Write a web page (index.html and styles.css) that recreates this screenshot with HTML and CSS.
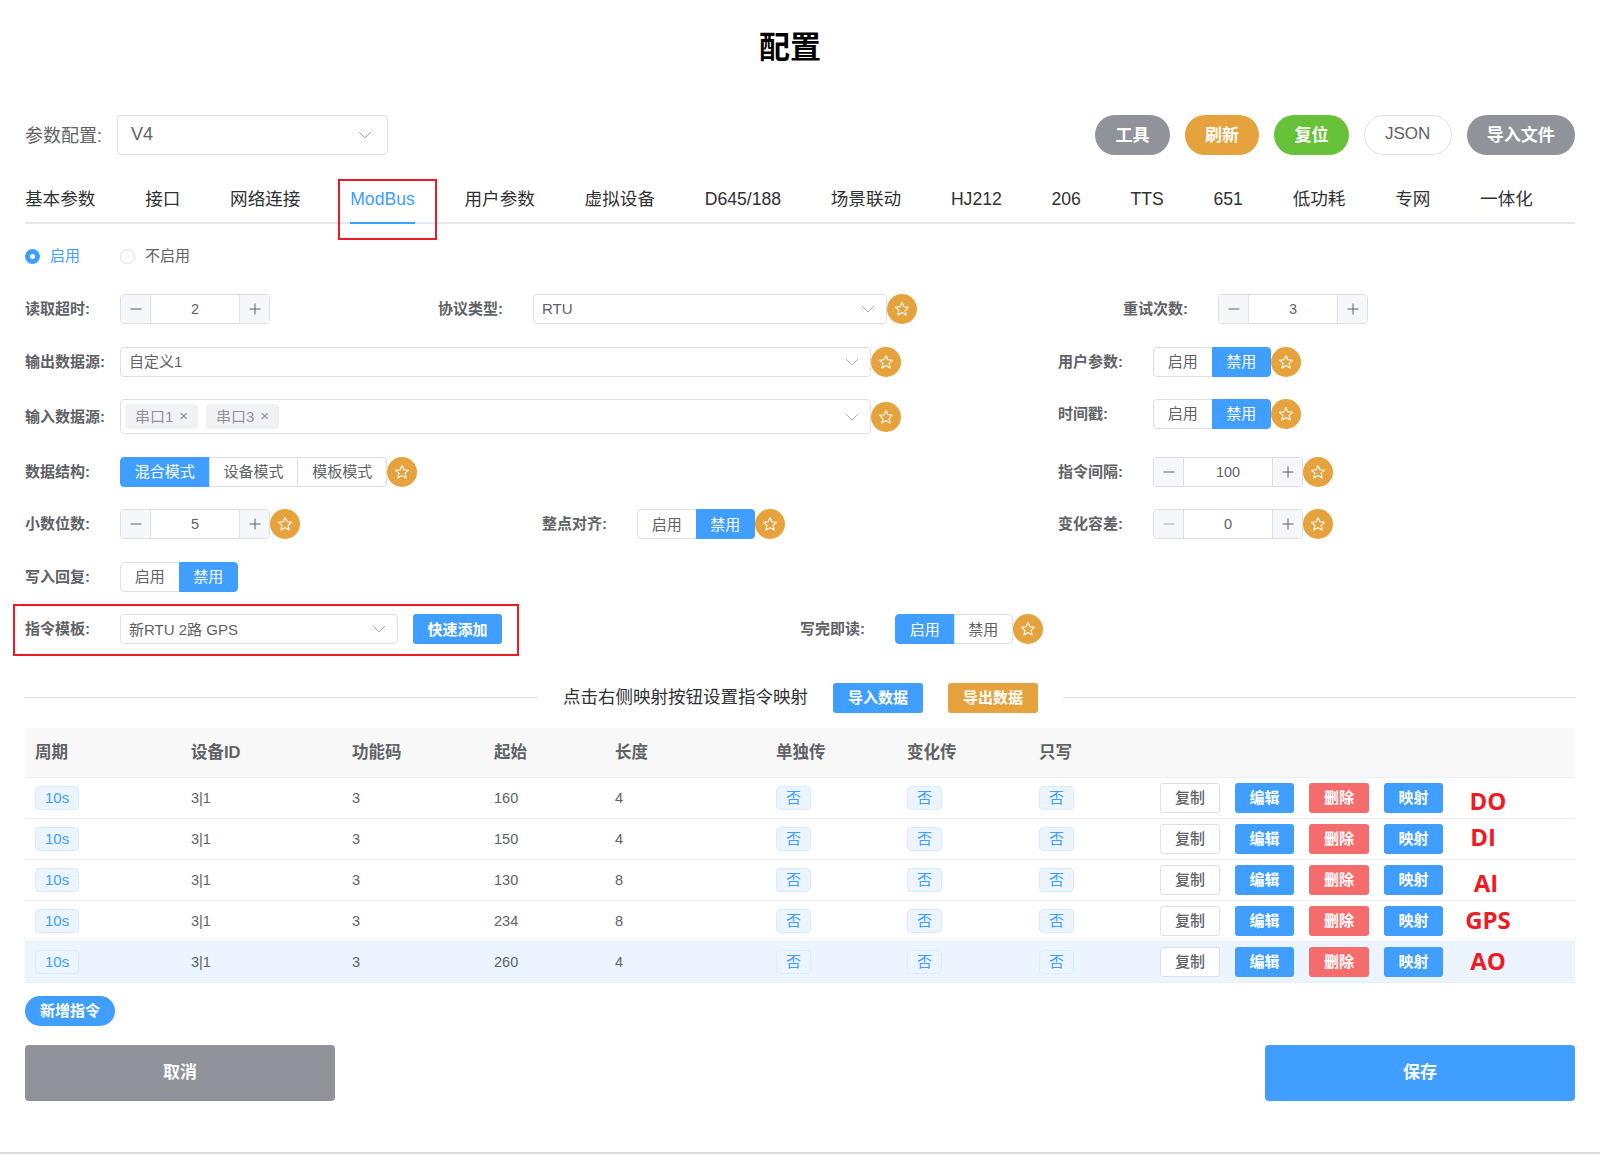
FILE: index.html
```html
<!DOCTYPE html>
<html lang="zh">
<head>
<meta charset="utf-8">
<title>配置</title>
<link rel="stylesheet" href="styles.css">
</head>
<body>
<svg class="sprites" width="0" height="0">
  <symbol id="star" viewBox="0 0 16 16"><path d="M8 1.6l1.9 4.2 4.6.5-3.4 3.1 1 4.5L8 11.6l-4.1 2.3 1-4.5L1.5 6.300l4.600-.5z" fill="none" stroke="currentColor" stroke-width="1.1" stroke-linejoin="round"/></symbol>
  <symbol id="chev" viewBox="0 0 14 8"><path d="M1 1l6 6 6-6" fill="none" stroke="currentColor" stroke-width="1"/></symbol>
  <symbol id="minus" viewBox="0 0 14 14"><path d="M1.500 7h11" fill="none" stroke="currentColor" stroke-width="1"/></symbol>
  <symbol id="plus" viewBox="0 0 14 14"><path d="M1.500 7h11M7 1.500v11" fill="none" stroke="currentColor" stroke-width="1"/></symbol>
</svg>
<div class="page">
  <h1 class="title">配置</h1>

  <div class="toolbar">
    <div class="config-pick">
      <span class="config-label">参数配置:</span>
      <div class="select select-config"><span>V4</span><svg class="chev"><use href="#chev"/></svg></div>
    </div>
    <div class="toolbar-btns">
      <button class="pill pill-gray">工具</button>
      <button class="pill pill-orange">刷新</button>
      <button class="pill pill-green">复位</button>
      <button class="pill pill-plain">JSON</button>
      <button class="pill pill-gray">导入文件</button>
    </div>
  </div>

  <nav class="tabs">
    <span class="tab">基本参数</span>
    <span class="tab">接口</span>
    <span class="tab">网络连接</span>
    <span class="tab tab-active">ModBus<i class="tab-mark"></i></span>
    <span class="tab">用户参数</span>
    <span class="tab">虚拟设备</span>
    <span class="tab">D645/188</span>
    <span class="tab">场景联动</span>
    <span class="tab">HJ212</span>
    <span class="tab">206</span>
    <span class="tab">TTS</span>
    <span class="tab">651</span>
    <span class="tab">低功耗</span>
    <span class="tab">专网</span>
    <span class="tab">一体化</span>
  </nav>

  <div class="radios">
    <label class="radio radio-on"><i class="dot"></i><span>启用</span></label>
    <label class="radio"><i class="dot"></i><span>不启用</span></label>
  </div>

  <form class="form">
    <div class="row">
      <div class="field f-a"><span class="lbl">读取超时:</span>
        <div class="num"><b class="num-btn"><svg><use href="#minus"/></svg></b><span class="num-val">2</span><b class="num-btn"><svg><use href="#plus"/></svg></b></div>
      </div>
      <div class="field f-b"><span class="lbl">协议类型:</span>
        <div class="select select-proto"><span>RTU</span><svg class="chev"><use href="#chev"/></svg></div>
        <i class="star"><svg><use href="#star"/></svg></i>
      </div>
      <div class="field"><span class="lbl">重试次数:</span>
        <div class="num"><b class="num-btn"><svg><use href="#minus"/></svg></b><span class="num-val">3</span><b class="num-btn"><svg><use href="#plus"/></svg></b></div>
      </div>
    </div>

    <div class="row">
      <div class="field f-wide"><span class="lbl">输出数据源:</span>
        <div class="select select-wide"><span>自定义1</span><svg class="chev"><use href="#chev"/></svg></div>
        <i class="star"><svg><use href="#star"/></svg></i>
      </div>
      <div class="field"><span class="lbl">用户参数:</span>
        <div class="seg"><span>启用</span><span class="seg-on">禁用</span></div>
        <i class="star"><svg><use href="#star"/></svg></i>
      </div>
    </div>

    <div class="row row-tall">
      <div class="field f-wide"><span class="lbl">输入数据源:</span>
        <div class="select select-wide select-tall">
          <div class="chips"><span class="chip">串口1<em>×</em></span><span class="chip">串口3<em>×</em></span></div>
          <svg class="chev"><use href="#chev"/></svg>
        </div>
        <i class="star"><svg><use href="#star"/></svg></i>
      </div>
      <div class="field field-up"><span class="lbl">时间戳:</span>
        <div class="seg"><span>启用</span><span class="seg-on">禁用</span></div>
        <i class="star"><svg><use href="#star"/></svg></i>
      </div>
    </div>

    <div class="row">
      <div class="field f-wide"><span class="lbl">数据结构:</span>
        <div class="seg seg-3"><span class="seg-on">混合模式</span><span>设备模式</span><span>模板模式</span></div>
        <i class="star"><svg><use href="#star"/></svg></i>
      </div>
      <div class="field"><span class="lbl">指令间隔:</span>
        <div class="num"><b class="num-btn"><svg><use href="#minus"/></svg></b><span class="num-val">100</span><b class="num-btn"><svg><use href="#plus"/></svg></b></div>
        <i class="star"><svg><use href="#star"/></svg></i>
      </div>
    </div>

    <div class="row">
      <div class="field f-c"><span class="lbl">小数位数:</span>
        <div class="num"><b class="num-btn"><svg><use href="#minus"/></svg></b><span class="num-val">5</span><b class="num-btn"><svg><use href="#plus"/></svg></b></div>
        <i class="star"><svg><use href="#star"/></svg></i>
      </div>
      <div class="field f-d"><span class="lbl">整点对齐:</span>
        <div class="seg"><span>启用</span><span class="seg-on">禁用</span></div>
        <i class="star"><svg><use href="#star"/></svg></i>
      </div>
      <div class="field"><span class="lbl">变化容差:</span>
        <div class="num"><b class="num-btn num-dim"><svg><use href="#minus"/></svg></b><span class="num-val">0</span><b class="num-btn"><svg><use href="#plus"/></svg></b></div>
        <i class="star"><svg><use href="#star"/></svg></i>
      </div>
    </div>

    <div class="row">
      <div class="field"><span class="lbl">写入回复:</span>
        <div class="seg"><span>启用</span><span class="seg-on">禁用</span></div>
      </div>
    </div>

    <div class="row">
      <div class="field f-tpl"><span class="lbl">指令模板:</span>
        <div class="select select-tpl"><span>新RTU 2路 GPS</span><svg class="chev"><use href="#chev"/></svg></div>
        <button type="button" class="btn btn-blue btn-quick">快速添加</button>
      </div>
      <div class="field"><span class="lbl">写完即读:</span>
        <div class="seg"><span class="seg-on">启用</span><span>禁用</span></div>
        <i class="star"><svg><use href="#star"/></svg></i>
      </div>
    </div>
    <i class="redbox redbox-tpl"></i>
  </form>

  <div class="divider">
    <i class="rule rule-l"></i>
    <span class="divider-text">点击右侧映射按钮设置指令映射</span>
    <button class="btn btn-blue btn-io">导入数据</button>
    <button class="btn btn-orange btn-io">导出数据</button>
    <i class="rule rule-r"></i>
  </div>

  <table class="grid">
    <colgroup>
      <col class="c1"><col class="c2"><col class="c3"><col class="c4"><col class="c5"><col class="c6"><col class="c7"><col class="c8"><col>
    </colgroup>
    <thead>
      <tr><th>周期</th><th>设备ID</th><th>功能码</th><th>起始</th><th>长度</th><th>单独传</th><th>变化传</th><th>只写</th><th></th></tr>
    </thead>
    <tbody>
      <tr>
        <td><span class="tag">10s</span></td><td>3|1</td><td>3</td><td>160</td><td>4</td>
        <td><span class="tag">否</span></td><td><span class="tag">否</span></td><td><span class="tag">否</span></td>
        <td class="acts"><button class="btn btn-plain">复制</button><button class="btn btn-blue">编辑</button><button class="btn btn-red">删除</button><button class="btn btn-blue">映射</button><span class="note note-do">DO</span></td>
      </tr>
      <tr>
        <td><span class="tag">10s</span></td><td>3|1</td><td>3</td><td>150</td><td>4</td>
        <td><span class="tag">否</span></td><td><span class="tag">否</span></td><td><span class="tag">否</span></td>
        <td class="acts"><button class="btn btn-plain">复制</button><button class="btn btn-blue">编辑</button><button class="btn btn-red">删除</button><button class="btn btn-blue">映射</button><span class="note note-di">DI</span></td>
      </tr>
      <tr>
        <td><span class="tag">10s</span></td><td>3|1</td><td>3</td><td>130</td><td>8</td>
        <td><span class="tag">否</span></td><td><span class="tag">否</span></td><td><span class="tag">否</span></td>
        <td class="acts"><button class="btn btn-plain">复制</button><button class="btn btn-blue">编辑</button><button class="btn btn-red">删除</button><button class="btn btn-blue">映射</button><span class="note note-ai">AI</span></td>
      </tr>
      <tr>
        <td><span class="tag">10s</span></td><td>3|1</td><td>3</td><td>234</td><td>8</td>
        <td><span class="tag">否</span></td><td><span class="tag">否</span></td><td><span class="tag">否</span></td>
        <td class="acts"><button class="btn btn-plain">复制</button><button class="btn btn-blue">编辑</button><button class="btn btn-red">删除</button><button class="btn btn-blue">映射</button><span class="note note-gps">GPS</span></td>
      </tr>
      <tr class="row-hover">
        <td><span class="tag">10s</span></td><td>3|1</td><td>3</td><td>260</td><td>4</td>
        <td><span class="tag">否</span></td><td><span class="tag">否</span></td><td><span class="tag">否</span></td>
        <td class="acts"><button class="btn btn-plain">复制</button><button class="btn btn-blue">编辑</button><button class="btn btn-red">删除</button><button class="btn btn-blue">映射</button><span class="note note-ao">AO</span></td>
      </tr>
    </tbody>
  </table>

  <button class="add">新增指令</button>

  <div class="footer">
    <button class="foot foot-gray">取消</button>
    <button class="foot foot-blue">保存</button>
  </div>
</div>
</body>
</html>
```
FILE: styles.css
```css
* { box-sizing: border-box; }
html, body { margin: 0; padding: 0; background: #fff; }
body {
  font-family: "Liberation Sans", "Noto Sans CJK SC", sans-serif;
  color: #606266;
  font-size: 15px;
}
.sprites { position: absolute; }
button { font-family: inherit; cursor: pointer; }

.page {
  position: relative;
  height: 1154px;
  padding: 0 25px;
  border-bottom: 2px solid #dcdcdc;
}
.title {
  margin: 0;
  height: 115px;
  padding: 26px 20px 0 0;
  line-height: 44px;
  text-align: center;
  font-size: 31px;
  font-weight: 700;
  color: #000;
}

.toolbar { display: flex; justify-content: space-between; height: 40px; }
.config-pick { display: flex; align-items: center; }
.config-label { width: 92px; padding-bottom: 2px; font-size: 18px; color: #606266; white-space: nowrap; }
.select {
  display: flex;
  align-items: center;
  justify-content: space-between;
  height: 30px;
  padding: 0 11px 0 8px;
  border: 1px solid #dcdfe6;
  border-radius: 4px;
  background: #fff;
  font-size: 15px;
  color: #606266;
}
.select > span { padding-bottom: 2px; }
.select-config { width: 271px; height: 40px; font-size: 18px; padding: 0 15px 0 13px; }
.select-proto { width: 354px; }
.select-wide { width: 751px; }
.select-tall { height: 35px; padding-left: 4px; }
.select-tpl { width: 278px; }
.chev { width: 14px; height: 8px; color: #a8abb2; flex: none; }

.toolbar-btns { display: flex; gap: 15px; }
.pill {
  height: 40px;
  padding: 0 20.250px 3px;
  border: 0;
  border-radius: 20px;
  font-size: 17px;
  font-weight: 700;
  color: #fff;
}
.pill-gray { background: #909399; }
.pill-orange { background: #e6a23c; }
.pill-green { background: #67c23a; }
.pill-plain { background: #fff; border: 1px solid #dcdfe6; color: #606266; font-weight: 400; }

.tabs {
  display: flex;
  justify-content: space-between;
  height: 50px;
  margin-top: 19px;
  padding-right: 42px;
  border-bottom: 2px solid #e4e7ed;
}
.tab {
  position: relative;
  height: 50px;
  line-height: 50px;
  font-size: 17.6px;
  color: #303133;
}
.tab-active { color: #409eff; }
.tab-active::after {
  content: "";
  position: absolute;
  left: -12px;
  right: -22px;
  top: 5px;
  height: 57px;
  border: 2px solid #ed1c24;
}
.tab-mark {
  position: absolute;
  left: 0;
  right: 0;
  bottom: 0;
  height: 2px;
  background: #409eff;
}

.radios { display: flex; gap: 40px; margin-top: 22px; height: 20px; }
.radio { display: flex; align-items: center; gap: 10px; font-size: 15px; color: #606266; }
.radio span { padding-bottom: 3px; }
.radio .dot {
  width: 15px;
  height: 15px;
  border: 1px solid #dcdfe6;
  border-radius: 50%;
}
.radio-on { color: #409eff; }
.radio-on .dot { border: 5px solid #409eff; background: #fff; width: 15px; height: 15px; }

.form {
  position: relative;
  display: flex;
  flex-direction: column;
  gap: 22.5px;
  margin-top: 28px;
}
.row { display: flex; align-items: center; min-height: 30px; }
.row-tall { min-height: 35px; }
.field { display: flex; align-items: center; }
.field-up { margin-top: -6px; }
.lbl { width: 95px; padding-bottom: 3px; font-size: 15px; font-weight: 700; color: #606266; white-space: nowrap; }
.f-a { width: 413px; }
.f-b { width: 685px; }
.f-wide { width: 1033px; }
.f-c { width: 517px; }
.f-d { width: 516px; }
.f-tpl { width: 775px; }

.num {
  display: flex;
  width: 150px;
  height: 30px;
  border: 1px solid #dcdfe6;
  border-radius: 4px;
  overflow: hidden;
}
.num-btn {
  display: flex;
  align-items: center;
  justify-content: center;
  width: 30px;
  background: #f5f7fa;
  color: #606266;
  font-weight: 400;
}
.num-btn svg { width: 14px; height: 14px; }
.num-btn:first-child { border-right: 1px solid #dcdfe6; }
.num-btn:last-child { border-left: 1px solid #dcdfe6; }
.num-dim { color: #a8abb2; }
.num-val { flex: 1; text-align: center; line-height: 28px; font-size: 14.5px; }

.star {
  display: flex;
  align-items: center;
  justify-content: center;
  width: 30px;
  height: 30px;
  border-radius: 50%;
  background: #e6a23c;
  color: #fff;
  flex: none;
}
.star svg { width: 16px; height: 16px; }

.seg { display: flex; height: 30px; font-size: 15px; }
.seg span {
  display: flex;
  align-items: center;
  justify-content: center;
  width: 59.500px;
  padding-bottom: 2px;
  border: 1px solid #dcdfe6;
  margin-left: -1px;
  background: #fff;
  color: #606266;
}
.seg span:first-child { margin-left: 0; border-radius: 4px 0 0 4px; }
.seg span:last-child { border-radius: 0 4px 4px 0; }
.seg .seg-on { background: #409eff; border-color: #409eff; color: #fff; }
.seg-3 span { width: 89.700px; }

.chips { display: flex; gap: 8px; }
.chip {
  display: flex;
  align-items: center;
  gap: 6px;
  width: 73px;
  height: 25px;
  padding: 0 10px 2px;
  border-radius: 4px;
  background: #f0f2f5;
  color: #909399;
  font-size: 15px;
  white-space: nowrap;
}
.chip em { font-style: normal; font-size: 15px; }

.btn {
  width: 60px;
  height: 30px;
  padding: 0 0 2px;
  border: 1px solid transparent;
  border-radius: 3px;
  font-size: 15px;
  font-weight: 700;
  color: #fff;
}
.btn-blue { background: #409eff; }
.btn-orange { background: #e6a23c; }
.btn-red { background: #f56c6c; }
.btn-plain { background: #fff; border-color: #dcdfe6; color: #606266; font-weight: 500; }
.btn-quick { width: 89px; margin-left: 15px; }
.btn-io { width: 90px; padding-bottom: 4px; }

.redbox { position: absolute; border: 2px solid #ed1c24; }
.redbox-tpl { left: -12px; top: 310px; width: 506px; height: 52px; }

.divider {
  display: flex;
  align-items: center;
  height: 30px;
  margin-top: 39px;
}
.rule { height: 1px; margin-bottom: 2px; background: #dcdfe6; }
.rule-l { width: 513px; }
.rule-r { flex: 1; margin-left: 25px; }
.divider-text { width: 295px; padding: 0 0 5px 25px; font-size: 17.5px; color: #303133; white-space: nowrap; }
.divider .btn-orange { margin-left: 25px; }

.grid {
  width: 100%;
  margin-top: 15px;
  border-collapse: collapse;
  table-layout: fixed;
}
.c1 { width: 156px; }
.c2 { width: 161px; }
.c3 { width: 142px; }
.c4 { width: 121px; }
.c5 { width: 161px; }
.c6 { width: 131px; }
.c7 { width: 132px; }
.c8 { width: 121px; }
.grid th {
  height: 49px;
  padding: 0 10px 2px;
  background: #f8f8f8;
  border-bottom: 1px solid #ebeef5;
  text-align: left;
  font-size: 16.5px;
  font-weight: 700;
  color: #606266;
}
.grid td {
  height: 41px;
  padding: 0 10px;
  border-bottom: 1px solid #ebeef5;
  font-size: 14.5px;
  color: #606266;
}
.row-hover td { background: #ecf5ff; }
.tag {
  display: inline-block;
  height: 24px;
  padding: 0 9px;
  border: 1px solid #d9ecff;
  border-radius: 4px;
  background: #ecf5ff;
  color: #409eff;
  font-size: 15px;
  line-height: 21px;
}
.acts { position: relative; }
.acts .btn { margin-right: 15px; }
.acts .btn:nth-child(2), .acts .btn:nth-child(4) { width: 59px; }
.note {
  position: absolute;
  left: 338px;
  width: 0;
  display: flex;
  justify-content: center;
  font-family: "Open Sans", sans-serif;
  font-size: 24px;
  line-height: 30px;
  font-weight: 700;
  color: #ed1c24;
}
.note-do { top: 8px; }
.note-di { top: 3px; left: 333px; }
.note-ai { top: 8px; left: 336px; }
.note-gps { top: 4px; }
.note-ao { top: 4px; }

.add {
  display: block;
  width: 90px;
  height: 30px;
  margin-top: 13px;
  padding: 0 0 2px;
  border: 0;
  border-radius: 15px;
  background: #409eff;
  color: #fff;
  font-size: 15px;
  font-weight: 700;
}

.footer { display: flex; justify-content: space-between; margin-top: 19px; }
.foot {
  width: 310px;
  height: 56px;
  padding: 0 0 4px;
  border: 0;
  border-radius: 4px;
  color: #fff;
  font-size: 17px;
  font-weight: 700;
}
.foot-gray { background: #909399; }
.foot-blue { background: #409eff; }
```
